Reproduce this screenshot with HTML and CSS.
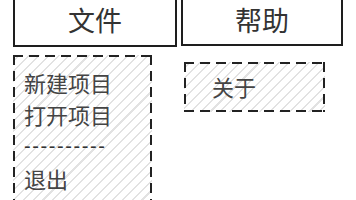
FILE: index.html
```html
<!DOCTYPE html>
<html lang="zh-CN">
<head>
    <meta charset="UTF-8">
    <meta name="viewport" content="width=device-width, initial-scale=1.0">
    <title>菜单草图</title>
    <link rel="stylesheet" href="styles.css">
</head>
<body>
    <div class="menubar">
        <div class="menu">
            <div class="menu-title">文件</div>
            <div class="dropdown dropdown-file">
                <div class="item">新建项目</div>
                <div class="item">打开项目</div>
                <div class="item sep">----------</div>
                <div class="item">退出</div>
            </div>
        </div>
        <div class="menu">
            <div class="menu-title">帮助</div>
            <div class="dropdown dropdown-help">
                <div class="item">关于</div>
            </div>
        </div>
    </div>
</body>
</html>
```

FILE: styles.css
```css
* { margin: 0; padding: 0; box-sizing: border-box; }
html, body { height: 100vh; overflow: hidden; }
body { font-family: "Noto Sans CJK SC", "Noto Sans", sans-serif; background: #fff; color: #333; }
.menubar { display: flex; gap: 4px; margin: -10px 0 0 13px; }
.menu { display: flex; flex-direction: column; }
.menu:first-child { width: 164px; }
.menu:last-child { width: 162px; }
.menu-title { height: 57px; border: 2px solid #1e1e1e; padding-top: 9px; text-align: center; font-size: 27px; line-height: 38px; color: #333; }
.menu:last-child .menu-title { height: 56px; }
.dropdown {
    color: #444; font-size: 22px;
    background:
        linear-gradient(to right, #222 10px, transparent 0) left top / 16px 2px repeat-x,
        linear-gradient(to right, #222 10px, transparent 0) left bottom / 16px 2px repeat-x,
        linear-gradient(to bottom, #222 10px, transparent 0) left top / 2px 16px repeat-y,
        linear-gradient(to bottom, #222 10px, transparent 0) right top / 2px 16px repeat-y,
        repeating-linear-gradient(135deg, #fff 0 4px, #e2e2e2 4px 5.5px, #fff 5.5px 7px);
}
.dropdown-file { width: 139px; height: 160px; margin-top: 8px; padding: 11px 0 0 11px; }
.dropdown-help { width: 141px; height: 50px; margin: 16px 0 0 3px; padding: 9px 0 0 28px; }
.item { line-height: 32px; white-space: nowrap; }
.dropdown-help .item { line-height: 30px; }
.sep { font-family: "Liberation Sans", sans-serif; font-size: 20px; letter-spacing: 1.6px; color: #333; }
```
